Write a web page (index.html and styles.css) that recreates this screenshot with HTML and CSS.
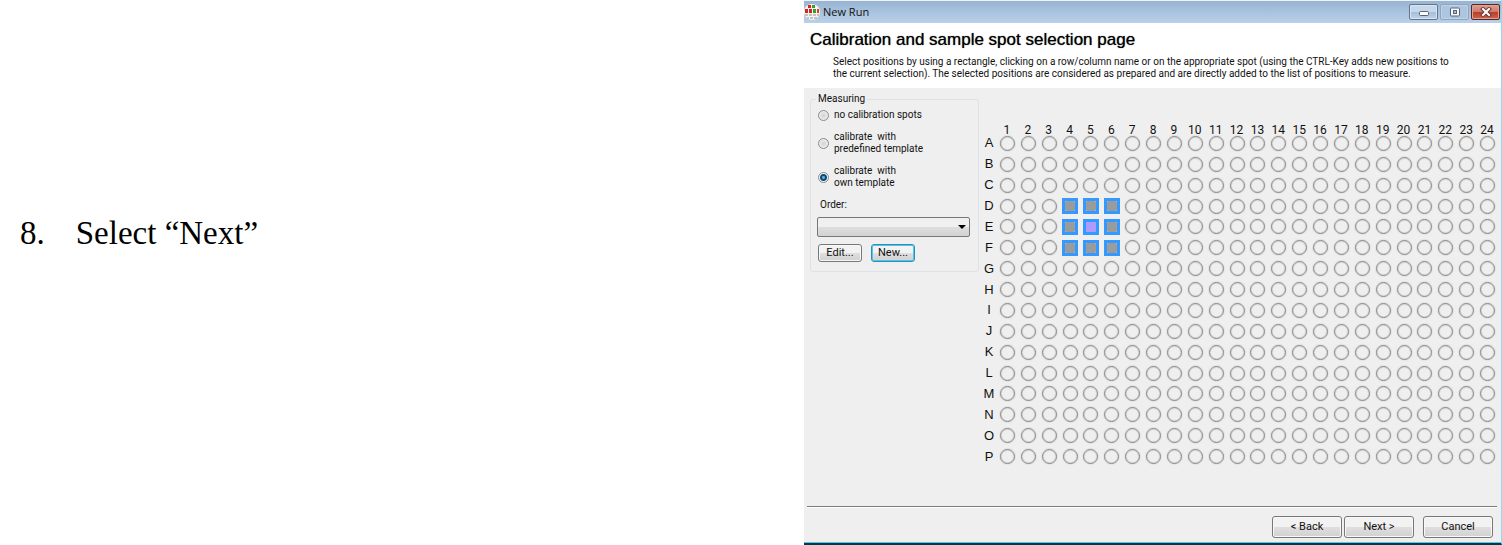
FILE: index.html
```html
<!DOCTYPE html>
<html lang="en">
<head>
<meta charset="utf-8">
<title>New Run</title>
<link rel="stylesheet" href="styles.css">
</head>
<body>
<main class="page">
  <section class="step"><span class="step-number">8.</span><span>Select “Next”</span></section>
  <section class="window">
    <header class="titlebar">
      <svg class="app-icon" viewBox="0 0 16 16" aria-hidden="true">
        <circle cx="8" cy="8" r="8" fill="#f4f4f0"/>
        <g fill="#d9261c"><rect x="4" y="1" width="3" height="3"/><rect x="1" y="5" width="3" height="4"/><rect x="5" y="5" width="3" height="4"/></g>
        <g fill="#3c9a35"><rect x="8" y="1" width="3" height="3"/><rect x="9" y="5" width="3" height="4"/></g>
        <rect x="13" y="5" width="2" height="4" fill="#e03a24"/>
        <g fill="#c3c3bd"><rect x="1" y="10" width="3" height="2"/><rect x="5" y="10" width="3" height="2"/><rect x="9" y="10" width="3" height="2"/><rect x="13" y="10" width="2" height="2"/><rect x="3" y="13" width="2" height="2"/><rect x="6" y="13" width="3" height="2"/><rect x="10" y="13" width="3" height="2"/></g>
      </svg>
      <span class="window-name">New Run</span>
      <div class="window-controls">
        <button class="control" aria-label="Minimize"><svg viewBox="0 0 12 10"><rect x="1.500" y="4.500" width="9" height="4" rx="1" fill="#fff" stroke="#596576"/></svg></button>
        <button class="control control-max" aria-label="Maximize"><svg viewBox="0 0 12 10"><rect x="1.500" y="1" width="9" height="8" rx="1" fill="#f5f7fa" stroke="#596576"/><rect x="4.500" y="3.500" width="3" height="3" fill="#a9bdd5" stroke="#596576"/></svg></button>
        <button class="control control-close" aria-label="Close"><svg viewBox="0 0 12 10"><path d="M3 2l6 6M9 2l-6 6" stroke="#6b3935" stroke-width="4" stroke-linecap="square"/><path d="M3 2l6 6M9 2l-6 6" stroke="#fff" stroke-width="2" stroke-linecap="square"/></svg></button>
      </div>
    </header>
    <div class="intro">
      <h1>Calibration and sample spot selection page</h1>
      <p>Select positions by using a rectangle, clicking on a row/column name or on the appropriate spot (using the CTRL-Key adds new positions to<br>the current selection). The selected positions are considered as prepared and are directly added to the list of positions to measure.</p>
    </div>
    <div class="content">
      <fieldset class="measuring">
        <legend>Measuring</legend>
        <label class="choice"><input type="radio" name="mode"><span>no calibration spots</span></label>
        <label class="choice"><input type="radio" name="mode"><span>calibrate&nbsp; with<br>predefined template</span></label>
        <label class="choice"><input type="radio" name="mode" checked><span>calibrate&nbsp; with<br>own template</span></label>
        <label class="order-label" for="order">Order:</label>
        <div class="combo">
          <select id="order"><option></option></select>
          <svg viewBox="0 0 8 4" aria-hidden="true"><path d="M0 0h8L4 4z"/></svg>
        </div>
        <div class="order-actions">
          <button class="button">Edit...</button>
          <button class="button button-focus">New...</button>
        </div>
      </fieldset>
      <div class="plate" id="plate"></div>
    </div>
    <footer class="actions">
      <button class="button">&lt; Back</button>
      <button class="button">Next &gt;</button>
      <button class="button button-cancel">Cancel</button>
    </footer>
  </section>
</main>
<script src="plate.js"></script>
</body>
</html>
```
FILE: styles.css
```css
* { box-sizing: border-box; }
body { margin: 0; background: #fff; color: #111; font-family: Roboto, "Liberation Sans", sans-serif; font-size: 10px; line-height: 12px; }
button, select, input { font: inherit; color: inherit; margin: 0; padding: 0; }
.page { display: grid; grid-template-columns: 804fr 698fr; min-height: 100vh; }
.step { display: flex; gap: 31px; padding: 214px 20px 0; color: #000; font: 33px/38px "Liberation Serif", serif; }
.window { display: flex; flex-direction: column; min-width: 0; background: #efefef; border-right: 1px solid #8edcf0; border-bottom: 2px solid #07384a; box-shadow: inset 0 -1px #56c8e8; }
.titlebar { display: flex; align-items: center; height: 23px; padding: 0 1px 0 0; border-top: 1px solid #edf3fa; background: linear-gradient(#98b4d2, #b9d1ea); }
.app-icon { width: 16px; height: 16px; }
.window-name { margin-left: 3px; font-size: 11px; font-family: "Open Sans", sans-serif; line-height: 16px; }
.window-controls { display: flex; gap: 2px; margin-left: auto; }
.control { display: grid; place-items: center; width: 29px; height: 16px; border: 1px solid #62758d; border-radius: 2px; background: linear-gradient(#c6d8eb 50%, #a5bdd8 50%, #bdd3e9); box-shadow: inset 0 0 0 1px #d8e5f2; }
.control-max { border-color: #8fa6c2; background: #adc5df; box-shadow: inset 0 0 0 1px #bfd3e8; }
.control-close { border-color: #5c2620; background: linear-gradient(#dda093, #cf7767 50%, #b83b26 50%, #cc6650); box-shadow: inset 0 0 0 1px #dda295; }
.control svg { width: 12px; height: 10px; }
.intro { padding: 8px 6px; height: 65px; background: #fff; }
.intro h1 { margin: 0; font: 17px/18px "Liberation Sans", sans-serif; color: #000; text-shadow: 0 0 1px #444; white-space: nowrap; }
.intro p { margin: 7px 0 0 23px; white-space: nowrap; }
.content { display: grid; grid-template-columns: 169px minmax(0, 1fr); align-items: start; gap: 2px; padding: 5px 3px 0 6px; }
.measuring { margin: 0; min-width: 0; padding: 4px 8px 9px 7px; border: 1px solid #dce3e8; border-radius: 3px; }
.measuring legend { padding: 0 2px; margin-left: -2px; }
.choice { display: flex; align-items: center; gap: 5px; margin-bottom: 10px; }
.choice input { appearance: none; width: 11px; height: 11px; border: 1px solid #8b8b8b; border-radius: 50%; background: radial-gradient(#d3d3d3, #f7f7f7); }
.choice input:checked { background: radial-gradient(circle, #4fb3e2 0 1px, #0c4a75 2px 3px, #f4f4f4 4px); }
.order-label { display: block; margin: 0 2px; }
.combo { display: grid; align-items: center; margin: 6px 0 7px -1px; }
.combo select, .combo svg { grid-area: 1 / 1; }
.combo select { appearance: none; width: 100%; height: 20px; border: 1px solid #777; border-radius: 2px; background: linear-gradient(#f0f0f0 50%, #dedede 50%, #d2d2d2); }
.combo svg { width: 8px; height: 4px; justify-self: end; margin-right: 4px; pointer-events: none; }
.order-actions { display: flex; gap: 9px; }
.button { width: 44px; height: 18px; border: 1px solid #777; border-radius: 3px; background: linear-gradient(#f2f2f2 50%, #dfdfdf 50%, #d1d1d1); box-shadow: inset 0 0 0 1px #f8f8f8; font-size: 11px; text-align: center; white-space: nowrap; }
.button-focus { border-color: #2f8eb3; box-shadow: inset 0 0 0 1px #4cc8ee; }
.plate { display: grid; grid-template-columns: 16px repeat(24, minmax(0, 1fr)); padding-top: 30px; }
.column-name { display: grid; place-items: center; height: 10px; padding-right: 1px; font-size: 12px; line-height: 14px; }
.row-name { display: grid; place-items: center; font: 13px/14px "Liberation Sans", sans-serif; }
.cell { display: grid; place-items: center; aspect-ratio: 1; }
.spot { width: 15px; height: 15px; border: 1px solid #868686; border-radius: 50%; background: none; box-shadow: 0 0 0 1px #e2e2e2, inset 0 0 0 1px #d8d8d8; }
.spot-selected { width: 16px; height: 16px; border: 3px solid #3399ff; border-radius: 0; background: radial-gradient(circle, #9b9b9b 6px, #e5e5e5 7px); box-shadow: none; }
.spot-active { background: #ab9cff; }
.actions { display: flex; gap: 2px; margin: auto 4px 5px 3px; padding: 9px 4px 0 0; justify-content: flex-end; border-top: 1px solid #7d7d7d; box-shadow: inset 0 1px #fff; }
.actions .button { width: 70px; height: 22px; }
.actions .button-cancel { margin-left: 7px; }
```
FILE: plate.js
```js
const plate = document.getElementById('plate');
const selectedRows = 'DEF';

function add(parent, tag, className, text = '') {
  const node = document.createElement(tag);
  node.className = className;
  node.textContent = text;
  parent.append(node);
  return node;
}

add(plate, 'span', 'corner');
for (let column = 1; column <= 24; column++) add(plate, 'span', 'column-name', column);

for (const row of 'ABCDEFGHIJKLMNOP') {
  add(plate, 'span', 'row-name', row);
  for (let column = 1; column <= 24; column++) {
    const cell = add(plate, 'div', 'cell');
    const spot = add(cell, 'button', 'spot');
    spot.setAttribute('aria-label', row + column);
    if (selectedRows.includes(row) && column >= 4 && column <= 6) spot.classList.add('spot-selected');
    if (row === 'E' && column === 5) spot.classList.add('spot-active');
  }
}
```
